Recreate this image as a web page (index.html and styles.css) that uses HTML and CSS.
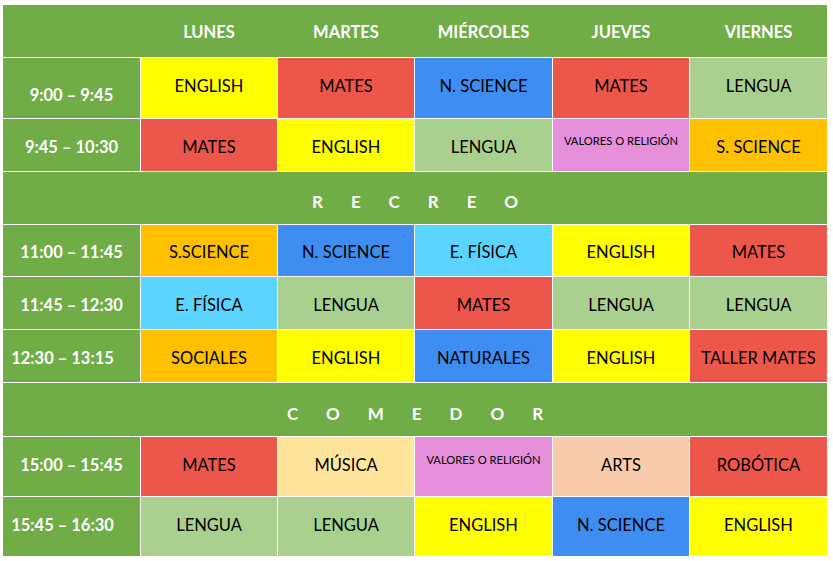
FILE: index.html
```html
<!DOCTYPE html>
<html lang="es">
<head>
<meta charset="utf-8">
<title>Horario</title>
<link rel="stylesheet" href="styles.css">
</head>
<body>
<div class="timetable">
  <div class="head">
    <div class="hcell"></div>
    <div class="hcell">LUNES</div>
    <div class="hcell">MARTES</div>
    <div class="hcell">MIÉRCOLES</div>
    <div class="hcell">JUEVES</div>
    <div class="hcell">VIERNES</div>
  </div>

  <div class="time r1 low">9:00 – 9:45</div>
  <div class="cell r1 up yellow">ENGLISH</div>
  <div class="cell r1 up red">MATES</div>
  <div class="cell r1 up blue">N. SCIENCE</div>
  <div class="cell r1 up red">MATES</div>
  <div class="cell r1 up lgreen">LENGUA</div>

  <div class="time r2 down1">9:45 – 10:30</div>
  <div class="cell r2 down1 red">MATES</div>
  <div class="cell r2 down1 yellow">ENGLISH</div>
  <div class="cell r2 down1 lgreen">LENGUA</div>
  <div class="cell r2 small pink vr2">VALORES O RELIGIÓN</div>
  <div class="cell r2 down1 orange">S. SCIENCE</div>

  <div class="break r2 brk1">RECREO</div>

  <div class="time r3 down1">11:00 – 11:45</div>
  <div class="cell r3 down1 orange">S.SCIENCE</div>
  <div class="cell r3 down1 blue">N. SCIENCE</div>
  <div class="cell r3 down1 lblue">E. FÍSICA</div>
  <div class="cell r3 down1 yellow">ENGLISH</div>
  <div class="cell r3 down1 red">MATES</div>

  <div class="time r2 down1">11:45 – 12:30</div>
  <div class="cell r2 down1 lblue">E. FÍSICA</div>
  <div class="cell r2 down1 lgreen">LENGUA</div>
  <div class="cell r2 down1 red">MATES</div>
  <div class="cell r2 down1 lgreen">LENGUA</div>
  <div class="cell r2 down1 lgreen">LENGUA</div>

  <div class="time r2 down1 shift">12:30 – 13:15</div>
  <div class="cell r2 down1 orange">SOCIALES</div>
  <div class="cell r2 down1 yellow">ENGLISH</div>
  <div class="cell r2 down1 blue">NATURALES</div>
  <div class="cell r2 down1 yellow">ENGLISH</div>
  <div class="cell r2 down1 red">TALLER MATES</div>

  <div class="break r4 brk2">COMEDOR</div>

  <div class="time r5 up1">15:00 – 15:45</div>
  <div class="cell r5 up1 red">MATES</div>
  <div class="cell r5 up1 lyellow">MÚSICA</div>
  <div class="cell r5 small pink vr5">VALORES O RELIGIÓN</div>
  <div class="cell r5 up1 peach">ARTS</div>
  <div class="cell r5 up1 red">ROBÓTICA</div>

  <div class="time r5 up1 shift">15:45 – 16:30</div>
  <div class="cell r5 up1 lgreen">LENGUA</div>
  <div class="cell r5 up1 lgreen">LENGUA</div>
  <div class="cell r5 up1 yellow">ENGLISH</div>
  <div class="cell r5 up1 blue">N. SCIENCE</div>
  <div class="cell r5 up1 yellow">ENGLISH</div>
</div>
</body>
</html>
```

FILE: styles.css
```css
html, body {
  margin: 0;
  padding: 0;
  background: #ffffff;
}

body {
  padding: 5px 0 0 3px;
  font-family: Lato, "Open Sans", sans-serif;
}

.timetable {
  display: grid;
  grid-template-columns: 137px 136px 136px 137px 136px 137px;
  gap: 1px;
  width: 824px;
  background: #ffffff;
}

.head {
  grid-column: 1 / -1;
  display: grid;
  grid-template-columns: 137px 136px 136px 137px 136px 137px;
  gap: 1px;
  height: 52px;
  background: #70ad47;
}

.hcell {
  display: flex;
  align-items: center;
  justify-content: center;
  color: #ffffff;
  font-weight: 700;
  font-size: 16.5px;
  padding-top: 1px;
}

.time, .cell, .break {
  display: flex;
  align-items: center;
  justify-content: center;
  box-sizing: border-box;
}

.time {
  background: #70ad47;
  color: #ffffff;
  font-weight: 700;
  font-size: 16.5px;
}

.cell {
  color: #000000;
  font-size: 16.5px;
}

.cell.small {
  font-size: 11.2px;
  align-items: flex-start;
}

.break {
  grid-column: 1 / -1;
  background: #70ad47;
  color: #ffffff;
  font-weight: 700;
  font-size: 17px;
  letter-spacing: 28px;
  padding-left: 28px;
}

.r1 { height: 60px; }
.r2 { height: 52px; }
.r3 { height: 51px; }
.r4 { height: 53px; }
.r5 { height: 59px; }

.up { padding-bottom: 5px; }
.low { padding-top: 13px; }
.down1 { padding-top: 3px; }
.up1 { padding-bottom: 4px; }
.brk1 { padding-top: 7px; }
.brk2 { padding-top: 8px; }
.vr2 { padding-top: 15px; }
.vr5 { padding-top: 16px; }
.shift { padding-right: 18px; }

.yellow { background: #ffff00; }
.red { background: #ed564b; }
.blue { background: #3d8ef0; }
.lgreen { background: #a9d08e; }
.orange { background: #ffc000; }
.pink { background: #e68fdb; }
.lblue { background: #5bd5ff; }
.lyellow { background: #ffe599; }
.peach { background: #f8cbad; }
```
